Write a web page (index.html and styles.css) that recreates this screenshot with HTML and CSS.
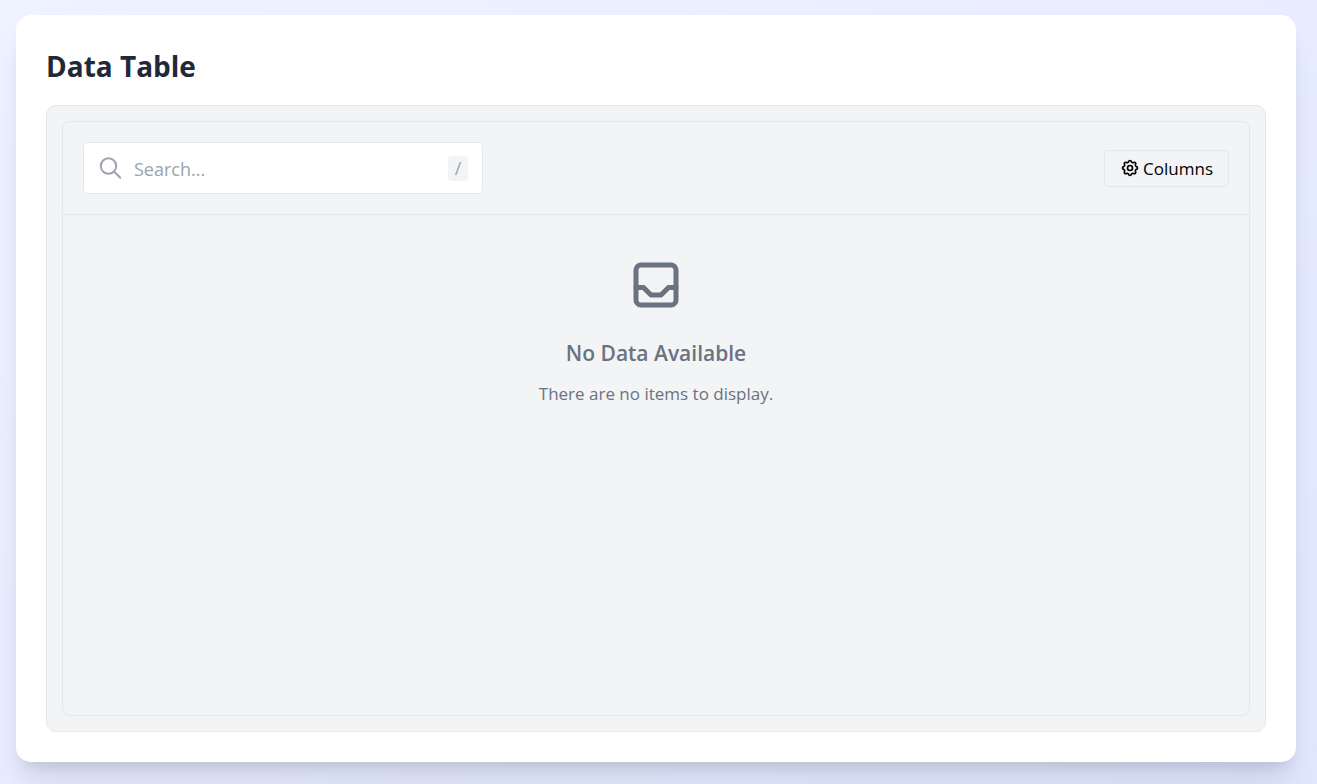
FILE: index.html
```html
<!DOCTYPE html>
<html lang="en">
<head>
<meta charset="utf-8">
<meta name="viewport" content="width=device-width, initial-scale=1">
<title>Data Table</title>
<link rel="stylesheet" href="styles.css">
</head>
<body>
<main class="card">
  <h1 class="title">Data Table</h1>
  <div class="frame">
    <section class="table-panel">
      <div class="toolbar">
        <label class="search">
          <svg class="search-icon" viewBox="0 0 22 22" aria-hidden="true"><circle cx="9.500" cy="9" r="7.700"/><path d="M15 14.500l6.300 6.300"/></svg>
          <input class="search-input" type="text" placeholder="Search..." aria-label="Search">
          <kbd class="shortcut">/</kbd>
        </label>
        <button class="columns-button" type="button">
          <svg class="gear-icon" viewBox="0 0 24 24" aria-hidden="true"><path d="M10.325 4.317c.426-1.756 2.924-1.756 3.35 0a1.724 1.724 0 0 0 2.573 1.066c1.543-.94 3.31.826 2.37 2.37a1.724 1.724 0 0 0 1.065 2.572c1.756.426 1.756 2.924 0 3.35a1.724 1.724 0 0 0-1.066 2.573c.94 1.543-.826 3.31-2.37 2.37a1.724 1.724 0 0 0-2.572 1.065c-.426 1.756-2.924 1.756-3.35 0a1.724 1.724 0 0 0-2.573-1.066c-1.543.94-3.31-.826-2.37-2.37a1.724 1.724 0 0 0-1.065-2.572c-1.756-.426-1.756-2.924 0-3.35a1.724 1.724 0 0 0 1.066-2.573c-.94-1.543.826-3.31 2.37-2.37 1 .608 2.296.07 2.572-1.065z"/><circle cx="12" cy="12" r="3"/></svg>
          Columns
        </button>
      </div>
      <div class="empty">
        <svg class="inbox-icon" viewBox="0 0 24 24" aria-hidden="true"><rect x="4" y="4" width="16" height="16" rx="2"/><path d="M4 13h3l3 3h4l3-3h3"/></svg>
        <h2 class="empty-title">No Data Available</h2>
        <p class="empty-text">There are no items to display.</p>
      </div>
    </section>
  </div>
</main>
</body>
</html>
```
FILE: styles.css
```css
* { box-sizing: border-box; }

body {
  margin: 0;
  min-height: 100vh;
  padding: 15px 21px 22px 16px;
  display: flex;
  font-family: "Open Sans", "Noto Sans", sans-serif;
  background: linear-gradient(to bottom right, #eff2ff, #e0e7ff);
}

.card {
  flex: 1;
  display: flex;
  flex-direction: column;
  padding: 30px;
  border-radius: 15px;
  background: #fff;
  box-shadow: 0 25px 31px -6px rgb(0 0 0 / 10%), 0 10px 13px -7px rgb(0 0 0 / 10%);
}

.title {
  margin: 0 0 18px;
  font-size: 28px;
  line-height: 42px;
  font-weight: 700;
  color: #1f2937;
}

.frame {
  flex: 1;
  display: flex;
  padding: 15px;
  border: 1px solid #e5e7eb;
  border-radius: 10px;
  background: #f3f4f6;
}

.table-panel {
  flex: 1;
  border: 1px solid #e5e7eb;
  border-radius: 8px;
}

.toolbar {
  display: flex;
  align-items: center;
  justify-content: space-between;
  padding: 20px;
  border-bottom: 1px solid #e5e7eb;
}

.search {
  display: flex;
  align-items: center;
  gap: 13px;
  width: 400px;
  height: 52px;
  padding: 0 14px 0 15px;
  border: 1px solid #e5e7eb;
  border-radius: 4px;
  background: #fff;
}

.search-icon {
  width: 22px;
  height: 22px;
  fill: none;
  stroke: #9ca3af;
  stroke-width: 2;
  stroke-linecap: round;
}

.search-input {
  flex: 1;
  min-width: 0;
  padding: 2px 0 0;
  border: 0;
  outline: 0;
  background: none;
  font: inherit;
  font-size: 18px;
  color: #1f2937;
}

.search-input::placeholder { color: #9ca3af; opacity: 1; }

.shortcut {
  width: 20px;
  border-radius: 4px;
  background: #f3f4f6;
  color: #9ca3af;
  font: inherit;
  font-size: 18px;
  line-height: 25px;
  text-align: center;
}

.columns-button {
  display: flex;
  align-items: center;
  gap: 3px;
  height: 37px;
  padding: 0 15px;
  border: 1px solid #e5e7eb;
  border-radius: 4px;
  background: #f3f4f6;
  font: inherit;
  font-size: 17px;
  color: #000;
}

.gear-icon {
  width: 20px;
  height: 20px;
  fill: none;
  stroke: currentColor;
  stroke-width: 2;
}

.empty {
  display: flex;
  flex-direction: column;
  align-items: center;
  padding: 40px 20px;
  color: #6b7280;
}

.inbox-icon {
  width: 60px;
  height: 60px;
  fill: none;
  stroke: currentColor;
  stroke-width: 2;
  stroke-linecap: round;
  stroke-linejoin: round;
}

.empty-title {
  margin: 20px 0 10px;
  font-size: 21px;
  line-height: 36px;
  font-weight: 600;
}

.empty-text {
  margin: 0;
  font-size: 17px;
  line-height: 26px;
}
```
